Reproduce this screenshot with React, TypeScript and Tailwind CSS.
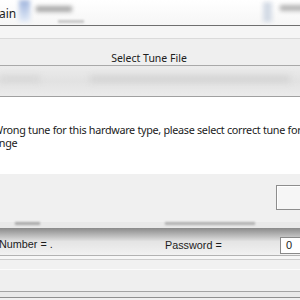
export default function App() {
  return (
    <div className="w-[300px] h-[300px] overflow-hidden bg-[#f0f0f0] font-['Noto_Sans',sans-serif] text-[#1b1b1b]">
      {/* blurred taskbar strip behind the dialog */}
      <div className="h-[25px] bg-gradient-to-b from-[#ffffff] to-[#f6f6f6] flex items-start">
        <span className="text-[12px] leading-none mt-[8px] -ml-[1px] text-[#222]">ain</span>
        <div className="ml-[3px] w-[11px] h-[22px] bg-gradient-to-b from-[#9fb4dc] to-[#e4ecf8] blur-[2px]" />
        <div className="ml-[6px] flex flex-col">
          <div className="mt-[6px] w-[36px] h-[6px] bg-[#a9a9a9] blur-[2px]" />
          <div className="mt-[8px] ml-[22px] w-[26px] h-[3px] bg-[#c9c9c9] blur-[1px]" />
        </div>
        <div className="ml-auto w-[9px] h-[20px] mt-[2px] bg-[#d4dbe6] blur-[2px]" />
        <div className="ml-[8px] mr-[-10px] mt-[5px] w-[30px] h-[6px] bg-[#b4b4b4] blur-[2px]" />
      </div>
      <div className="h-px bg-[#6f6f6f]" />
      <div className="h-[12px] bg-[#f5f5f5]" />
      <div className="h-px bg-[#dadada]" />
      <div className="h-[26px] bg-[#efefef] flex justify-center items-end">
        <span className="text-[10.5px] leading-[14px] ml-[-2px] text-[#202020]">Select Tune File</span>
      </div>
      <div className="h-px bg-[#a9a9a9]" />
      <div className="h-[30px] bg-gradient-to-b from-[#ececec] via-[#e2e2e2] to-[#ebebeb] flex items-start pt-[10px] gap-[50px]">
        <div className="w-[40px] h-[6px] bg-[#d6d6d6] blur-[3px]" />
        <div className="w-[200px] h-[6px] bg-[#d2d2d2] blur-[3px]" />
      </div>
      <div className="h-px bg-[#a0a0a0]" />
      <div className="h-[77px] bg-white pt-[26px] flex flex-col">
        <div className="translate-x-[-7px] text-[10.8px] leading-[13px] tracking-[-0.3px] whitespace-nowrap">
          <div>Wrong tune for this hardware type, please select correct tune for</div>
          <div>ange</div>
        </div>
      </div>
      <div className="h-[48px] bg-[#f0f0f0] pt-[11px] flex">
        <div className="ml-[276px] shrink-0 w-[40px] h-[25px] border border-[#8d8d8d] bg-[#f6f6f6] shadow-[inset_1px_1px_0_#fff]" />
      </div>
      <div className="h-[6px] bg-[#e9e9e9] flex items-start">
        <div className="ml-[15px] w-[25px] h-[3px] bg-[#a8a8a8] blur-[1px]" />
        <div className="ml-[125px] w-[90px] h-[3px] bg-[#b0b0b0] blur-[1px]" />
      </div>
      <div className="h-[27px] bg-gradient-to-b from-[#8a8a8a] via-[#e4e4e4] to-[#f2f2f2] flex items-end pb-[4px] font-['Liberation_Sans',sans-serif]">
        <span className="-ml-[1px] text-[10.8px] leading-[14px] whitespace-nowrap w-[166px] shrink-0">Number = .</span>
        <span className="text-[10.8px] leading-[14px] whitespace-nowrap w-[115px] shrink-0 mb-[-1px]">Password =</span>
        <div className="w-[30px] h-[17px] shrink-0 border border-[#8a8a8a] border-r-0 bg-white text-[11px] leading-[15px] pl-[5px] mb-[-3px]">0</div>
      </div>
      <div className="h-px bg-[#b3b3b3]" />
      <div className="h-[3px] bg-[#f7f7f7]" />
      <div className="h-px bg-[#cdcdcd]" />
      <div className="h-[9px] bg-[#f1f1f1]" />
      <div className="h-px bg-[#fbfbfb]" />
      <div className="h-[21px] bg-[#efefef]" />
      <div className="h-px bg-[#a3a3a3]" />
      <div className="h-[5px] bg-[#e9e9e9]" />
      <div className="h-px bg-[#8f8f8f]" />
    </div>
  );
}
